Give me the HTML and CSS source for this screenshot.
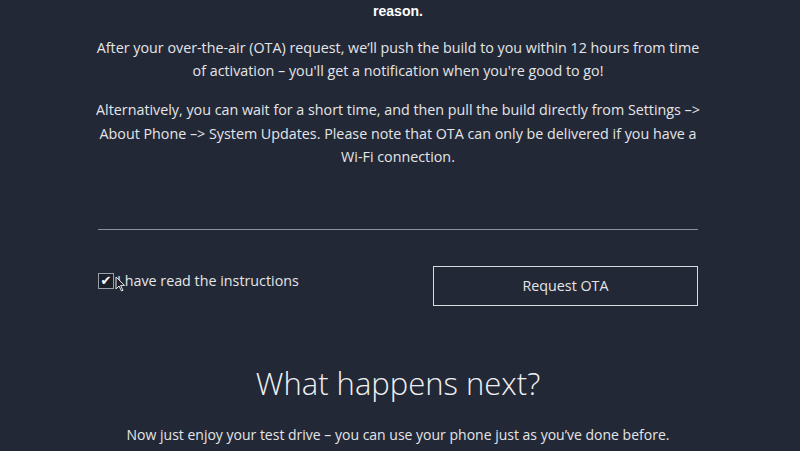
FILE: index.html
```html
<!DOCTYPE html>
<html>
<head>
<meta charset="utf-8">
<link rel="stylesheet" href="styles.css">
</head>
<body>
<main class="page">
  <p class="lead">reason.</p>
  <p class="para p1">After your over-the-air (OTA) request, we’ll push the build to you within 12 hours from time of activation – you'll get a notification when you're good to go!</p>
  <p class="para p2">Alternatively, you can wait for a short time, and then pull the build directly from Settings –&gt; About Phone –&gt; System Updates. Please note that OTA can only be delivered if you have a Wi-Fi connection.</p>
  <hr class="divider">
  <div class="actions">
    <label class="agree">
      <span class="box">✔</span>
      <span class="agree-text">I have read the instructions</span>
      <svg class="cursor" width="11" height="16" viewBox="0 0 11 16"><path d="M1 1 L1 13 L4 10 L6.5 15 L8 14.3 L5.6 9.4 L9.5 9.4 Z" fill="#1c1f27" stroke="#e8e8ea" stroke-width="1"/></svg>
    </label>
    <button class="btn">Request OTA</button>
  </div>
  <h2 class="next">What happens next?</h2>
  <p class="para tail">Now just enjoy your test drive – you can use your phone just as you’ve done before.</p>
</main>
</body>
</html>
```

FILE: styles.css
```css
html, body {
  margin: 0;
  padding: 0;
  background: #232836;
  height: 100%;
  overflow: hidden;
}
body {
  font-family: "Open Sans", "Noto Sans", sans-serif;
  color: #e4e5e8;
}
.page {
  width: 600px;
  margin: 0 auto;
  display: flex;
  flex-direction: column;
  position: relative;
  left: -2px;
}
.lead {
  margin: 0;
  padding-top: 1px;
  font-family: "Liberation Sans", sans-serif;
  font-weight: bold;
  font-size: 14px;
  line-height: 20px;
  text-align: center;
  color: #ffffff;
}
.para {
  margin: 0 -4px;
  font-size: 14.3px;
  line-height: 23.5px;
  text-align: center;
}
.p1 { margin-top: 15px; line-height: 23px; }
.p2 { margin-top: 16px; }
.divider {
  border: 0;
  border-top: 1px solid #8b909b;
  margin: 60px 0 0 0;
  width: 600px;
}
.actions {
  display: flex;
  justify-content: space-between;
  align-items: center;
  margin-top: 36px;
}
.agree {
  display: flex;
  align-items: center;
  gap: 3px;
  font-size: 14.3px;
  margin-top: -10px;
  position: relative;
}
.box {
  width: 14px;
  height: 14px;
  border: 1px solid #9aa0aa;
  background: #1b1f2a;
  color: #ffffff;
  font-size: 13px;
  line-height: 14px;
  text-align: center;
  font-family: "DejaVu Sans", sans-serif;
}
.cursor {
  position: absolute;
  left: 17px;
  top: 5px;
}
.btn {
  width: 265px;
  height: 40px;
  background: transparent;
  border: 1px solid #d9dbe0;
  color: #e4e5e8;
  font-family: "Open Sans", "Noto Sans", sans-serif;
  font-size: 14.3px;
  padding: 0;
}
.next {
  margin: 55px 0 0 0;
  font-weight: 300;
  font-size: 31px;
  line-height: 44px;
  text-align: center;
  color: #f0f0f2;
}
.tail { margin: 18px 0 0 0; padding: 0 4px; font-size: 14px; }
```
